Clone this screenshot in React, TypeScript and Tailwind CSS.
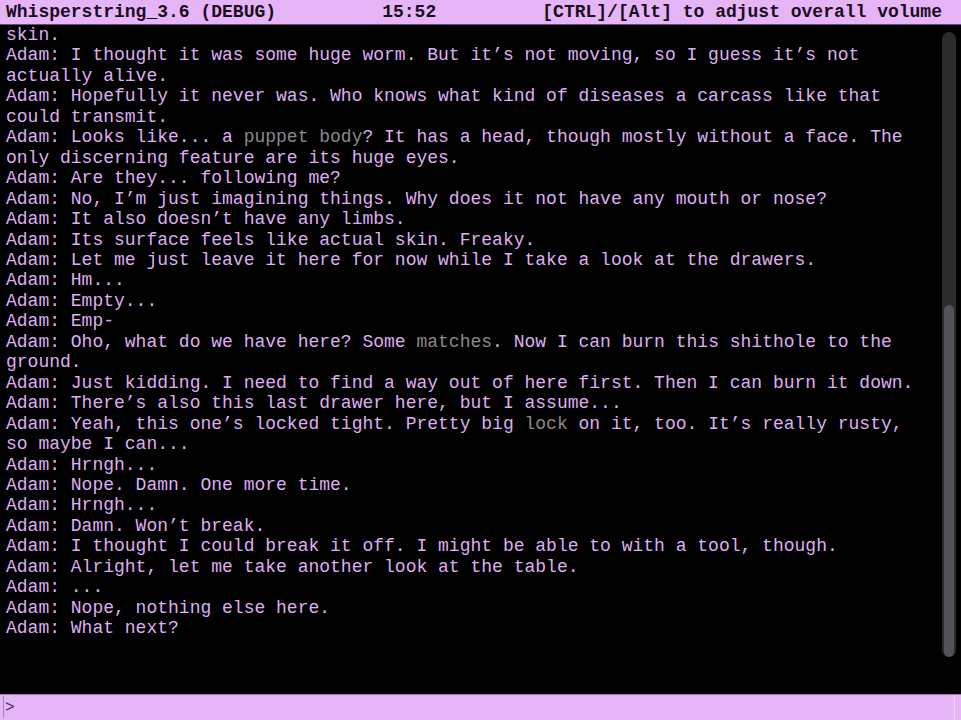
import React from "react";

type Seg = { t: string; dim?: boolean };

const lines: Seg[][] = [
  [{ t: "skin." }],
  [{ t: "Adam: I thought it was some huge worm. But it\u2019s not moving, so I guess it\u2019s not actually alive." }],
  [{ t: "Adam: Hopefully it never was. Who knows what kind of diseases a carcass like that could transmit." }],
  [
    { t: "Adam: Looks like... a " },
    { t: "puppet body", dim: true },
    { t: "? It has a head, though mostly without a face. The only discerning feature are its huge eyes." },
  ],
  [{ t: "Adam: Are they... following me?" }],
  [{ t: "Adam: No, I\u2019m just imagining things. Why does it not have any mouth or nose?" }],
  [{ t: "Adam: It also doesn\u2019t have any limbs." }],
  [{ t: "Adam: Its surface feels like actual skin. Freaky." }],
  [{ t: "Adam: Let me just leave it here for now while I take a look at the drawers." }],
  [{ t: "Adam: Hm..." }],
  [{ t: "Adam: Empty..." }],
  [{ t: "Adam: Emp-" }],
  [
    { t: "Adam: Oho, what do we have here? Some " },
    { t: "matches", dim: true },
    { t: ". Now I can burn this shithole to the ground." },
  ],
  [{ t: "Adam: Just kidding. I need to find a way out of here first. Then I can burn it down." }],
  [{ t: "Adam: There\u2019s also this last drawer here, but I assume..." }],
  [
    { t: "Adam: Yeah, this one\u2019s locked tight. Pretty big " },
    { t: "lock", dim: true },
    { t: " on it, too. It\u2019s really rusty, so maybe I can..." },
  ],
  [{ t: "Adam: Hrngh..." }],
  [{ t: "Adam: Nope. Damn. One more time." }],
  [{ t: "Adam: Hrngh..." }],
  [{ t: "Adam: Damn. Won\u2019t break." }],
  [{ t: "Adam: I thought I could break it off. I might be able to with a tool, though." }],
  [{ t: "Adam: Alright, let me take another look at the table." }],
  [{ t: "Adam: ..." }],
  [{ t: "Adam: Nope, nothing else here." }],
  [{ t: "Adam: What next?" }],
];

export default function App() {
  return (
    <div
      className="flex h-[720px] w-[961px] flex-col overflow-hidden bg-black text-[18px]"
      style={{ fontFamily: '"Liberation Mono", "DejaVu Sans Mono", monospace' }}
    >
      <div className="flex h-[25px] shrink-0 items-center justify-between border-b border-[#6a4a78] bg-[#e6b5f7] pl-[6px] pr-[19px] font-bold leading-none text-[#1a0d20]">
        <span>Whisperstring_3.6 (DEBUG)</span>
        <span>15:52</span>
        <span>[CTRL]/[Alt] to adjust overall volume</span>
      </div>

      <div className="flex min-h-0 flex-1">
        <div className="w-[937px] overflow-hidden pl-[6px] pr-[10px] leading-[20.45px] text-[#dfaef2]">
          {lines.map((segs, i) => (
            <div key={i} className="whitespace-pre-wrap">
              {segs.map((s, j) =>
                s.dim ? (
                  <span key={j} className="text-[#8a8a8a]">
                    {s.t}
                  </span>
                ) : (
                  <span key={j}>{s.t}</span>
                )
              )}
            </div>
          ))}
        </div>
        <div className="flex flex-1 justify-center pb-[37px] pt-[7px]">
          <div className="flex w-[14px] flex-col rounded-full bg-[#2b2b2d] px-[2px]">
            <div className="h-[273px] shrink-0" />
            <div className="flex-1 rounded-full bg-[#525258]" />
          </div>
        </div>
      </div>

      <div className="relative flex h-[26px] shrink-0 items-center border-t border-[#9c7aae] bg-[#e6b5f7] pl-[5px]">
        <div className="absolute left-[3px] top-[1px] h-[22px] w-px bg-[#8d8fb0]" />
        <span className="text-[16px] leading-none text-[#4a2a58]">&gt;</span>
        <div className="absolute right-[6px] top-0 h-full w-px bg-[#f1d8fb]" />
      </div>
    </div>
  );
}
